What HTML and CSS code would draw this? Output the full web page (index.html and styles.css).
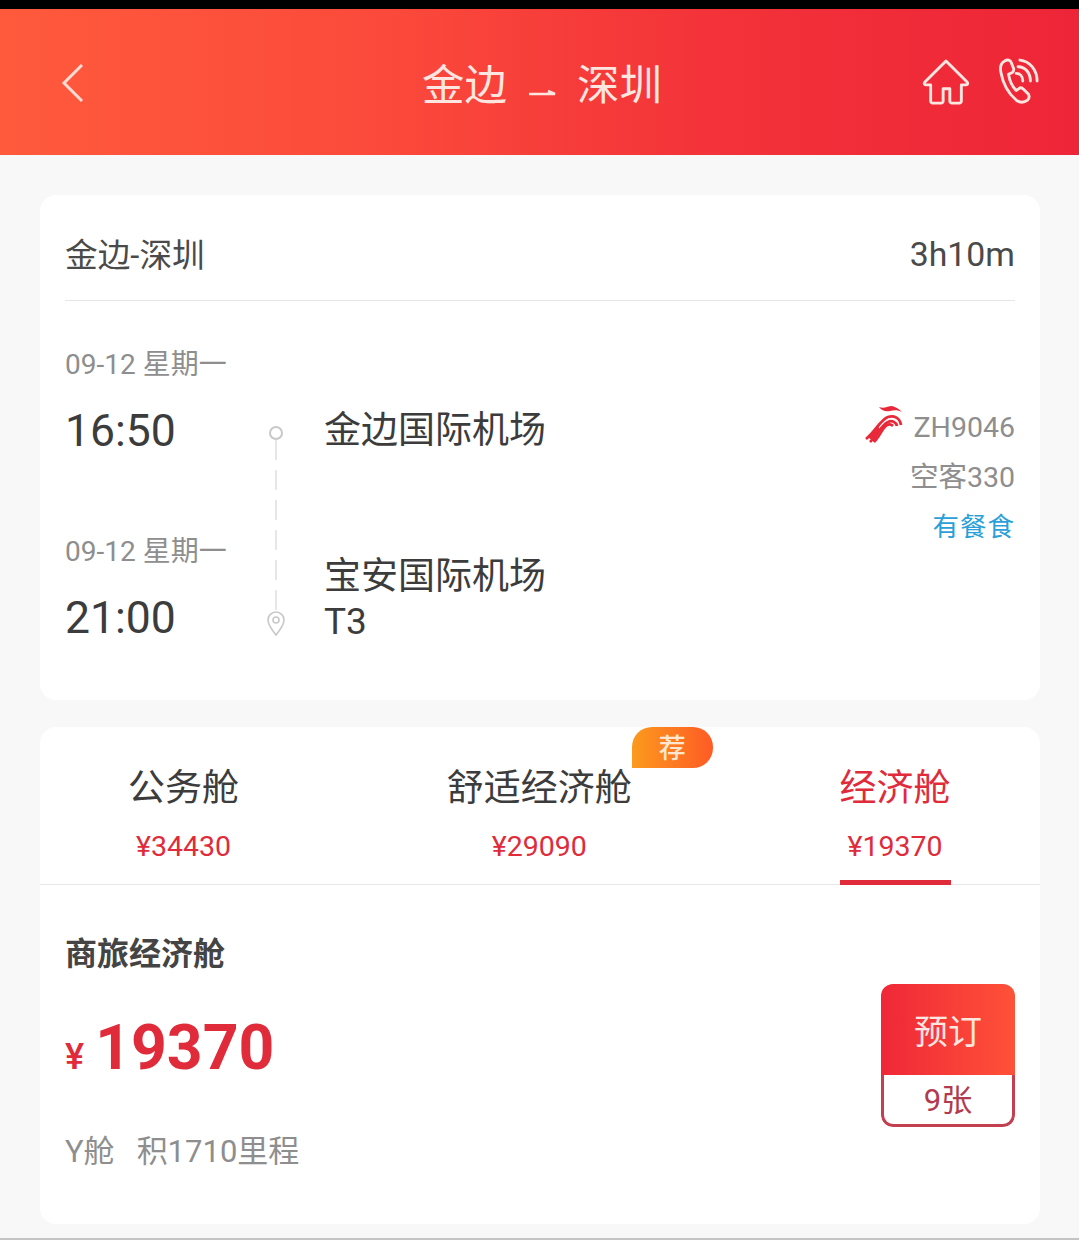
FILE: index.html
```html
<!DOCTYPE html>
<html lang="zh">
<head>
<meta charset="utf-8">
<title>金边 - 深圳</title>
<link rel="stylesheet" href="styles.css">
</head>
<body>
<div class="statusbar"></div>
<header class="topbar">
  <div class="side">
    <svg class="back" viewBox="0 0 24 40" width="24" height="40"><path d="M21 2 3 20l18 18"/></svg>
  </div>
  <h1 class="title"><span>金边</span><svg class="arrow" viewBox="0 0 30 12" width="30" height="12"><path d="M2 9h26l-7-3"/></svg><span>深圳</span></h1>
  <div class="side actions">
    <svg class="home" viewBox="0 0 50 48" width="48" height="46"><path d="M25 2 3 24c-1 1-1 3 1 3h5v17c0 1 1 2 2 2h9c1 0 2-1 2-2V31h7v13c0 1 1 2 2 2h8c1 0 2-1 2-2V27h5c2 0 2-2 1-3z"/></svg>
    <svg class="phone" viewBox="0 0 42 48" width="40" height="46"><path d="M6 3C2 5 1 10 2 15c2 11 8 22 16 29 4 3 8 3 12 0 2-2 2-4 1-6l-5-5c-2-2-4-2-5-1l-3 2c-4-4-7-11-8-17l4-2c1-1 2-3 1-5l-2-5C12 2 9 1 6 3z"/><path d="M18 16c4 0 7 3 7 8M20 9c8 0 13 7 13 15M22 2c10 1 18 10 18 22"/></svg>
  </div>
</header>
<main class="page">
  <section class="card route-card">
    <div class="route-head"><span class="route-name">金边-深圳</span><span class="duration">3h10m</span></div>
    <div class="route-body">
      <div class="times">
        <div class="date">09-12 星期一</div>
        <div class="time">16:50</div>
        <div class="date date-arrive">09-12 星期一</div>
        <div class="time">21:00</div>
      </div>
      <div class="track">
        <span class="dot"></span>
        <span class="dash"></span>
        <svg class="pin" viewBox="0 0 20 26" width="20" height="26"><path d="M10 25C6 20 2 15 2 10a8 8 0 0 1 16 0c0 5-4 10-8 15z"/><circle cx="10" cy="10" r="3"/></svg>
      </div>
      <div class="airports">
        <div class="airport">金边国际机场</div>
        <div class="airport airport-arrive">宝安国际机场</div>
        <div class="airport terminal">T3</div>
      </div>
      <div class="flight">
        <div class="flight-no">
          <svg class="logo" viewBox="0 0 40 40" width="40" height="40">
            <path class="logo-fill" d="M15 3c5 2 9-1 13-1 4 1 7 3 10 6-4-2-8-2-12-1-4 1-8 0-11-4z"/>
            <path class="logo-line" d="M37 21c-1-7-7-10-13-8C16 16 12 27 2 35"/>
            <path class="logo-line" d="M33 22c-1-4-5-6-9-4-7 3-10 13-18 20"/>
            <path class="logo-line" d="M29 22c-2-2-4-2-6-1-5 3-7 11-13 17"/>
            <path class="logo-fill" d="M4 33 14 21l2 6-6 11z"/>
          </svg>
          <span>ZH9046</span>
        </div>
        <div class="plane">空客330</div>
        <div class="meal">有餐食</div>
      </div>
    </div>
  </section>
  <section class="card fare-card">
    <div class="tabs">
      <div class="tab"><div class="tab-name">公务舱</div><div class="tab-price">¥34430</div></div>
      <div class="tab"><div class="tab-name">舒适经济舱</div><div class="tab-price">¥29090</div><span class="badge">荐</span></div>
      <div class="tab tab-active"><div class="tab-name">经济舱</div><div class="tab-price">¥19370</div></div>
    </div>
    <div class="fare">
      <div class="fare-info">
        <div class="fare-name">商旅经济舱</div>
        <div class="fare-price"><span class="yen">¥</span><span class="amount">19370</span></div>
        <div class="fare-meta"><span>Y舱</span><span>积1710里程</span></div>
      </div>
      <div class="book">
        <div class="book-label">预订</div>
        <div class="book-count">9张</div>
      </div>
    </div>
  </section>
</main>
</body>
</html>
```
FILE: styles.css
```css
* { box-sizing: border-box; }
html, body { margin: 0; padding: 0; }
body {
  width: 1079px;
  height: 1240px;
  overflow: hidden;
  background: #f8f8f8;
  font-family: Roboto, "Noto Sans CJK SC", sans-serif;
  border-bottom: 2px solid #c4c4c4;
}
.statusbar { height: 9px; background: #000; }
.topbar {
  height: 146px;
  display: flex;
  align-items: center;
  padding: 0 40px 0 41px;
  color: #fff;
  background: linear-gradient(90deg, #ff5a3c 0%, #fb4a3b 35%, #f33339 65%, #ee2538 100%);
}
.side { flex: 1; display: flex; align-items: center; }
.back { fill: none; stroke: #fbdcd4; stroke-width: 3; margin-left: 20px; margin-top: 2px; }
.title {
  display: flex;
  align-items: center;
  gap: 20px;
  margin: 8px 0 0 4px;
  font-size: 42.5px;
  font-weight: 400;
  line-height: 60px;
  color: #fde6e0;
}
.arrow { fill: none; stroke: #fde6e0; stroke-width: 2.5; margin-top: 10px; }
.actions { justify-content: flex-end; gap: 29px; }
.home, .phone { fill: none; stroke: #fde6e0; stroke-width: 3; stroke-linejoin: round; stroke-linecap: round; }
.phone { margin-top: -2px; }
.page { padding: 40px 39px 0 40px; display: flex; flex-direction: column; gap: 27px; }
.card { background: #fff; border-radius: 16px; }
.route-card { height: 505px; padding: 0 25px; }
.route-head {
  height: 106px;
  display: flex;
  align-items: center;
  justify-content: space-between;
  border-bottom: 1px solid #e6e6e6;
  color: #4a4a4a;
}
.route-name { font-size: 32.7px; padding-top: 9px; }
.duration { font-size: 33.8px; padding-top: 13px; }
.route-body { display: flex; padding-top: 44px; }
.times { width: 186px; }
.date { font-size: 28px; line-height: 40px; color: #8e8e8e; }
.time { font-size: 44.5px; line-height: 52px; margin-top: 20px; color: #3c3c3c; }
.date-arrive { margin-top: 75px; }
.track {
  width: 50px;
  display: flex;
  flex-direction: column;
  align-items: center;
  padding-top: 81px;
}
.dot { width: 14px; height: 14px; border: 2px solid #c8c8c8; border-radius: 50%; }
.dash { width: 2px; height: 170px; background: repeating-linear-gradient(#e6e6e6 0 20px, transparent 20px 30px); }
.pin { fill: none; stroke: #c8c8c8; stroke-width: 1.6; }
.airports { flex: 1; padding-left: 23px; padding-top: 61px; color: #3c3c3c; }
.airport { font-size: 37px; line-height: 50px; }
.airport-arrive { margin-top: 96px; }
.terminal { margin-top: -5px; }
.flight { display: flex; flex-direction: column; align-items: flex-end; padding-top: 57px; font-size: 28.5px; color: #8e8e8e; }
.flight-no { display: flex; align-items: center; gap: 10px; height: 50px; }
.logo { margin-top: -6px; }
.logo-fill { fill: #e8293a; }
.logo-line { fill: none; stroke: #e8293a; stroke-width: 2.8; }
.plane { height: 50px; line-height: 51px; }
.meal { height: 50px; line-height: 50px; font-size: 26.5px; color: #2a9fd8; letter-spacing: 1px; }
.fare-card { height: 497px; }
.tabs {
  height: 158px;
  display: flex;
  justify-content: space-between;
  padding: 0 89.5px 0 88px;
  border-bottom: 1px solid #e8e8e8;
}
.tab { position: relative; text-align: center; padding-top: 37px; color: #3c3c3c; height: 158px; }
.tab-name { font-size: 37px; line-height: 50px; }
.tab-price { font-size: 28.5px; line-height: 36px; margin-top: 15px; color: #e02b3a; }
.tab-active .tab-name { color: #e02b3a; }
.tab-active::after {
  content: "";
  position: absolute;
  left: 0;
  right: 0;
  bottom: 0;
  height: 5px;
  background: #e02b3a;
}
.badge {
  position: absolute;
  left: 185px;
  top: 0;
  width: 81px;
  height: 41px;
  border-radius: 20px 20px 20px 0;
  background: linear-gradient(90deg, #fb9a1d, #ff5b25);
  color: #ffe6d0;
  font-size: 27px;
  font-weight: 500;
  line-height: 44px;
  text-align: center;
  overflow: hidden;
}
.fare {
  display: flex;
  justify-content: space-between;
  padding: 0 25px;
}
.fare-info { padding-top: 47px; }
.fare-name { font-size: 32px; font-weight: 700; line-height: 44px; color: #444; }
.fare-price { display: flex; align-items: baseline; gap: 11px; height: 76px; margin-top: 34px; color: #e02b3a; }
.yen { font-size: 36px; font-weight: 500; }
.amount { font-size: 62.5px; font-weight: 700; line-height: 76px; }
.fare-meta { display: flex; gap: 22px; font-size: 31px; line-height: 44px; margin-top: 44px; color: #8e8e8e; }
.book {
  width: 134px;
  height: 143px;
  margin-top: 99px;
  border-radius: 12px;
  overflow: hidden;
  display: flex;
  flex-direction: column;
}
.book-label {
  height: 91px;
  background: linear-gradient(90deg, #ef2838, #ff5138);
  color: #fde6e0;
  font-size: 34px;
  line-height: 97px;
  text-align: center;
  flex: none;
  overflow: hidden;
}
.book-count {
  flex: 1;
  min-height: 0;
  padding-top: 3px;
  text-align: center;
  font-size: 31px;
  line-height: 46px;
  color: #b23a50;
  border: 3px solid #c2404f;
  border-top: 0;
  border-radius: 0 0 12px 12px;
}
```
